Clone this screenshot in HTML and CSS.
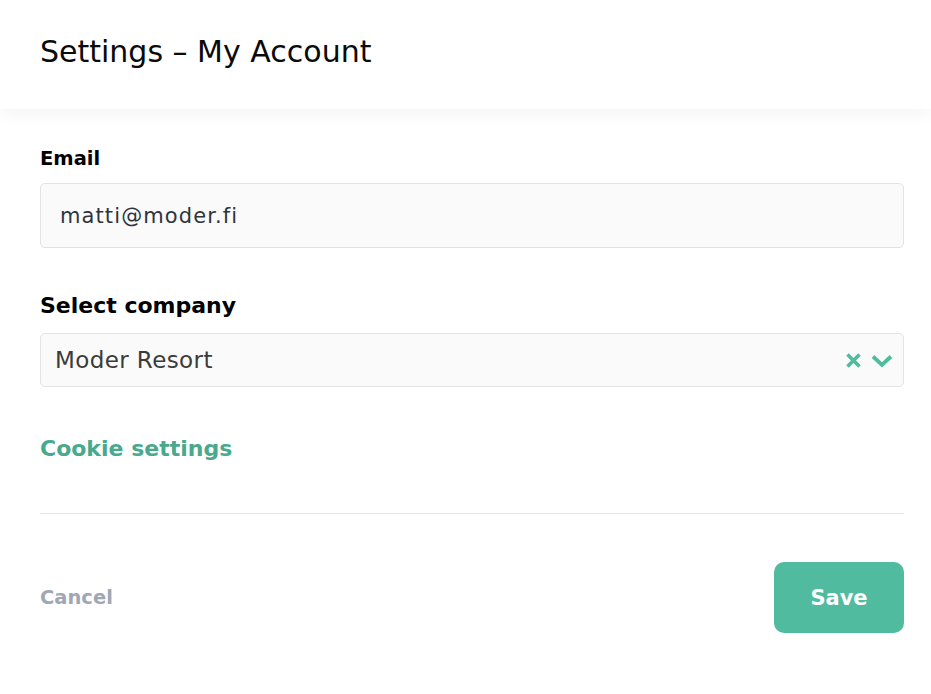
FILE: index.html
```html
<!DOCTYPE html>
<html lang="en">
<head>
<meta charset="utf-8">
<title>Settings – My Account</title>
<link rel="stylesheet" href="styles.css">
</head>
<body>
<header class="header">
  <h1 class="title">Settings – My Account</h1>
</header>
<main class="content">
  <label class="label label-email" for="email">Email</label>
  <div class="input" id="email">matti@moder.fi</div>

  <label class="label label-company">Select company</label>
  <div class="select">
    <span class="select-value">Moder Resort</span>
    <span class="select-icons">
      <svg class="icon-clear" width="17" height="15" viewBox="0 0 17 15" aria-hidden="true">
        <path d="M2.5 1.5 L14.5 13.5 M14.5 1.5 L2.5 13.5" stroke="#4dbd9e" stroke-width="3.6" stroke-linecap="butt" fill="none"/>
      </svg>
      <svg class="icon-chevron" width="22" height="14" viewBox="0 0 22 14" aria-hidden="true">
        <path d="M2 2.5 L11 11 L20 2.5" stroke="#4dbd9e" stroke-width="3.8" stroke-linecap="butt" stroke-linejoin="miter" fill="none"/>
      </svg>
    </span>
  </div>

  <a class="cookie-link" href="#">Cookie settings</a>

  <hr class="divider">

  <div class="footer">
    <a class="cancel" href="#">Cancel</a>
    <button class="save" type="button">Save</button>
  </div>
</main>
</body>
</html>
```

FILE: styles.css
```css
* { box-sizing: border-box; }

html, body {
  margin: 0;
  padding: 0;
  background: #ffffff;
}

body {
  font-family: "DejaVu Sans", "Open Sans", sans-serif;
  color: #000;
  width: 931px;
  height: 694px;
  overflow: hidden;
}

.header {
  height: 109px;
  display: flex;
  align-items: center;
  padding-left: 40px;
  background: #fff;
  box-shadow: 0 6px 18px rgba(0, 0, 0, 0.045);
  position: relative;
  z-index: 1;
}

.title {
  margin: 0;
  font-size: 30px;
  font-weight: 500;
  line-height: 36px;
  padding-bottom: 6px;
  color: #0a0a0a;
}

.content {
  padding: 38px 27px 0 40px;
  display: flex;
  flex-direction: column;
}

.label {
  display: block;
  font-weight: 700;
  line-height: 24px;
  color: #000;
}

.label-email {
  font-size: 19.5px;
  margin-bottom: 12px;
}

.label-company {
  font-size: 22px;
  margin-top: 46px;
  margin-bottom: 15px;
}

.input {
  height: 65px;
  border: 1px solid #e3e3e3;
  border-radius: 5px;
  background: #fafafa;
  padding-left: 19px;
  display: flex;
  align-items: center;
  font-size: 21px;
  letter-spacing: 1.1px;
  color: #2d3440;
}

.select {
  height: 54px;
  border: 1px solid #e3e3e3;
  border-radius: 5px;
  background: #fafafa;
  padding-left: 14px;
  padding-right: 10px;
  display: flex;
  align-items: center;
  justify-content: space-between;
  font-size: 23px;
  letter-spacing: 0.4px;
  color: #3b3b3b;
}

.select-icons {
  display: flex;
  align-items: center;
  gap: 9px;
  padding-top: 1px;
}

.icon-clear, .icon-chevron { display: block; }

.cookie-link {
  margin-top: 48px;
  font-size: 22px;
  font-weight: 700;
  line-height: 28px;
  color: #48a98d;
  text-decoration: none;
  align-self: flex-start;
}

.divider {
  margin: 50px 0 0 0;
  border: 0;
  border-top: 1px solid #e6e6e6;
  height: 0;
}

.footer {
  margin-top: 48px;
  display: flex;
  align-items: center;
  justify-content: space-between;
}

.cancel {
  font-size: 19.5px;
  font-weight: 700;
  color: #a0a7b4;
  text-decoration: none;
}

.save {
  width: 130px;
  height: 71px;
  border: 0;
  border-radius: 10px;
  background: #50bb9f;
  color: #fff;
  font-family: inherit;
  font-size: 21px;
  font-weight: 700;
  cursor: pointer;
}
```
